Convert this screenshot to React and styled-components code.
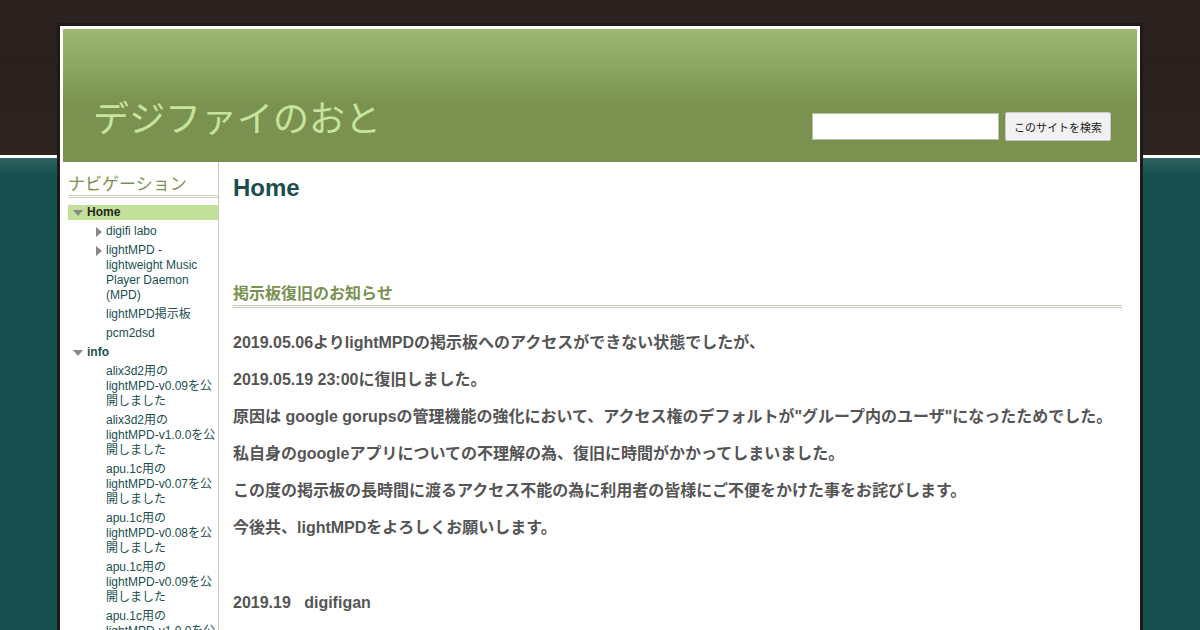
import styled, { createGlobalStyle } from "styled-components";

const GlobalStyle = createGlobalStyle`
  html, body {
    margin: 0;
    padding: 0;
  }
  body {
    font-family: "Liberation Sans", "Noto Sans CJK JP", sans-serif;
    background: linear-gradient(
      to bottom,
      #2c221f 0,
      #2a201d 60px,
      #2e2522 155px,
      #ffffff 155px,
      #ffffff 158px,
      #2d6261 158px,
      #17504f 176px,
      #17504f 100%
    );
    min-height: 630px;
    overflow: hidden;
  }
`;

const Page = styled.div`
  width: 1074px;
  margin: 26px auto 0;
  border: 3px solid #fff;
  border-bottom: none;
  box-shadow: 0 0 0 3px #1d1a19;
  background: #fff;
  min-height: 610px;
`;

const Header = styled.header`
  height: 133px;
  background: linear-gradient(to bottom, #9bb873 0, #88a25f 45px, #7a9150 75px, #7a9150 100%);
  display: flex;
  align-items: flex-end;
  justify-content: space-between;
  padding: 0 26px 20px 30px;
  box-sizing: border-box;
`;

const SiteTitle = styled.h1`
  margin: 0 0 6px;
  font-weight: normal;
  font-size: 36px;
  line-height: 40px;
  color: #c6e49c;
  font-family: "Noto Sans CJK JP", sans-serif;
`;

const SearchForm = styled.form`
  display: flex;
  align-items: center;
  gap: 6px;
  margin-bottom: 1px;
`;

const SearchInput = styled.input`
  width: 187px;
  height: 27px;
  box-sizing: border-box;
  border: 1px solid #b9c6a4;
  background: #fff;
  padding: 0 4px;
`;

const SearchButton = styled.button`
  height: 29px;
  width: 106px;
  box-sizing: border-box;
  border: 1px solid #c8c8c8;
  border-radius: 2px;
  background: #f1f1f1;
  color: #222;
  font-size: 11px;
  font-family: "Noto Sans CJK JP", sans-serif;
  padding: 0;
`;

const Body = styled.div`
  display: flex;
  align-items: stretch;
  min-height: 480px;
`;

const Sidebar = styled.nav`
  width: 150px;
  flex-shrink: 0;
  padding-left: 5px;
  border-right: 1px solid #c6c9b4;
`;

const NavHeading = styled.h3`
  margin: 12px 0 7px;
  padding-bottom: 0;
  font-size: 17px;
  line-height: 21px;
  font-weight: normal;
  color: #7a9150;
  border-bottom: 3px double #cfd1c2;
`;

const NavList = styled.ul`
  list-style: none;
  margin: 0;
  padding: 0;
`;

const NavRow = styled.div`
  display: flex;
  align-items: flex-start;
  padding-left: ${(p) => p.$indent}px;
  background: ${(p) => (p.$active ? "#c3e09b" : "transparent")};
  margin-bottom: 4px;
`;

const Toggle = styled.span`
  width: ${(p) => (p.$open ? 19 : 14)}px;
  height: 15px;
  flex-shrink: 0;
  display: flex;
  align-items: center;
  justify-content: ${(p) => (p.$open ? "flex-start" : "center")};
`;

const NavText = styled.a`
  font-size: 12px;
  line-height: 15px;
  color: ${(p) => (p.$strong && p.$active ? "#1f2a1a" : "#1a4f4e")};
  font-weight: ${(p) => (p.$strong ? "bold" : "normal")};
  text-decoration: none;
  overflow-wrap: anywhere;
`;

const Main = styled.main`
  flex: 1;
  padding: 0 15px 0 14px;
`;

const PageTitle = styled.h2`
  margin: 12px 0 0;
  font-size: 24px;
  line-height: 28px;
  color: #1a4f4e;
  font-weight: bold;
`;

const SectionTitle = styled.h3`
  margin: 82px 0 0;
  padding-bottom: 1px;
  font-size: 16px;
  line-height: 20px;
  color: #7a9150;
  border-bottom: 3px double #c9cbb8;
`;

const Text = styled.p`
  margin: 0;
  font-size: 16px;
  line-height: 21px;
  font-weight: bold;
  color: #555;
  padding-top: ${(p) => p.$gap || 16}px;
  white-space: pre;
`;

const DownTri = () => (
  <svg width="10" height="6" viewBox="0 0 10 6" style={{ marginLeft: 5 }}>
    <polygon points="0,0 10,0 5,6" fill="#888" />
  </svg>
);

const RightTri = () => (
  <svg width="6" height="10" viewBox="0 0 6 10">
    <polygon points="0,0 6,5 0,10" fill="#888" />
  </svg>
);

const nav = [
  { label: "Home", indent: 0, open: true, strong: true, active: true },
  { label: "digifi labo", indent: 24, closed: true },
  { label: "lightMPD - lightweight Music Player Daemon (MPD)", indent: 24, closed: true },
  { label: "lightMPD掲示板", indent: 24 },
  { label: "pcm2dsd", indent: 24 },
  { label: "info", indent: 0, open: true, strong: true },
  { label: "alix3d2用のlightMPD-v0.09を公開しました", indent: 24 },
  { label: "alix3d2用のlightMPD-v1.0.0を公開しました", indent: 24 },
  { label: "apu.1c用のlightMPD-v0.07を公開しました", indent: 24 },
  { label: "apu.1c用のlightMPD-v0.08を公開しました", indent: 24 },
  { label: "apu.1c用のlightMPD-v0.09を公開しました", indent: 24 },
  { label: "apu.1c用のlightMPD-v1.0.0を公開しました", indent: 24 },
];

const paragraphs = [
  "2019.05.06よりlightMPDの掲示板へのアクセスができない状態でしたが、",
  "2019.05.19 23:00に復旧しました。",
  "原因は google gorupsの管理機能の強化において、アクセス権のデフォルトが\"グループ内のユーザ\"になったためでした。",
  "私自身のgoogleアプリについての不理解の為、復旧に時間がかかってしまいました。",
  "この度の掲示板の長時間に渡るアクセス不能の為に利用者の皆様にご不便をかけた事をお詫びします。",
  "今後共、lightMPDをよろしくお願いします。",
];

export default function App() {
  return (
    <>
      <GlobalStyle />
      <Page>
        <Header>
          <SiteTitle>デジファイのおと</SiteTitle>
          <SearchForm onSubmit={(e) => e.preventDefault()}>
            <SearchInput type="text" />
            <SearchButton type="submit">このサイトを検索</SearchButton>
          </SearchForm>
        </Header>
        <Body>
          <Sidebar>
            <NavHeading>ナビゲーション</NavHeading>
            <NavList>
              {nav.map((item) => (
                <li key={item.label}>
                  <NavRow $indent={item.indent} $active={item.active}>
                    <Toggle $open={item.open}>
                      {item.open ? <DownTri /> : item.closed ? <RightTri /> : null}
                    </Toggle>
                    <NavText href="#" $strong={item.strong} $active={item.active}>
                      {item.label}
                    </NavText>
                  </NavRow>
                </li>
              ))}
            </NavList>
          </Sidebar>
          <Main>
            <PageTitle>Home</PageTitle>
            <SectionTitle>掲示板復旧のお知らせ</SectionTitle>
            {paragraphs.map((t, i) => (
              <Text key={i} $gap={i === 0 ? 24 : 16}>{t}</Text>
            ))}
            <Text $gap={54}>{"2019.19   digifigan"}</Text>
          </Main>
        </Body>
      </Page>
    </>
  );
}
